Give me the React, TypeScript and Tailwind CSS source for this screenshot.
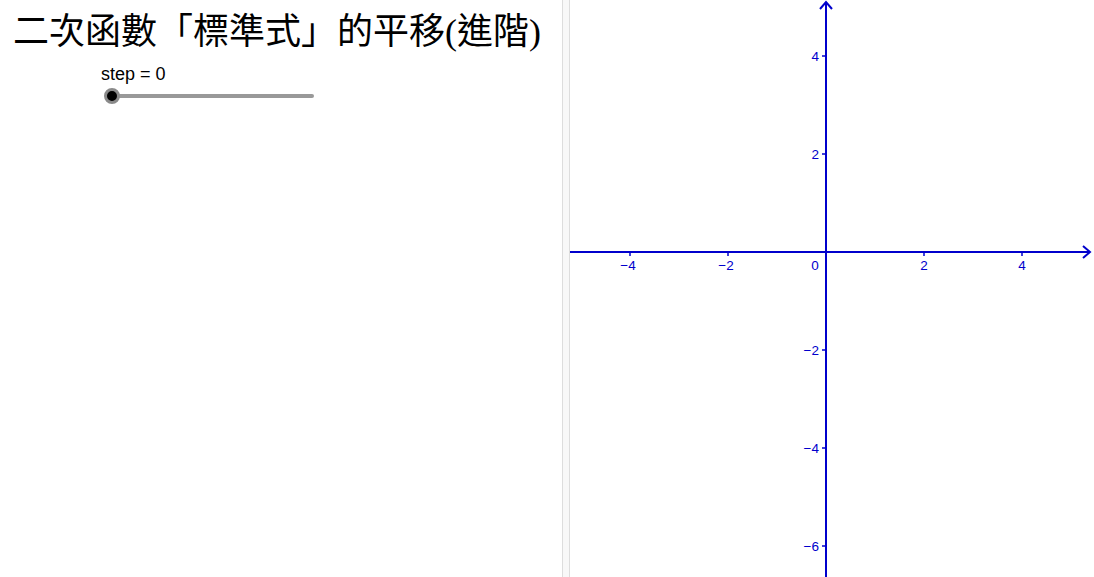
import React from 'react';

const AXIS = '#0000cc';
const UNIT = 49;
const OX = 256;
const OY = 252;

const xTicks = [-4, -2, 2, 4];
const yTicks = [4, 2, -2, -4, -6];

const fmt = (n: number) => (n < 0 ? `\u2212${-n}` : `${n}`);
const LABEL_FONT = "'Liberation Sans', Arial, sans-serif";

const Graph: React.FC = () => (
  <svg width="524" height="577" viewBox="0 0 524 577" className="block">
    {/* x axis */}
    <line x1="0" y1={OY} x2="520" y2={OY} stroke={AXIS} strokeWidth="2" />
    <polyline points={`513,${OY - 6} 520,${OY} 513,${OY + 6}`} fill="none" stroke={AXIS} strokeWidth="2" />
    {/* y axis */}
    <line x1={OX} y1="2" x2={OX} y2="577" stroke={AXIS} strokeWidth="2" />
    <polyline points={`${OX - 6},9 ${OX},2 ${OX + 6},9`} fill="none" stroke={AXIS} strokeWidth="2" />

    {xTicks.map((t) => (
      <g key={`x${t}`}>
        <line x1={OX + t * UNIT} y1={OY} x2={OX + t * UNIT} y2={OY + 4} stroke={AXIS} strokeWidth="1.5" />
        <text
          x={OX + t * UNIT + (t < 0 ? -2 : 0)}
          y={OY + 18}
          fill={AXIS}
          fontSize="13.5"
          fontFamily={LABEL_FONT}
          textAnchor="middle"
        >
          {fmt(t)}
        </text>
      </g>
    ))}
    <text x={OX - 11} y={OY + 18} fill={AXIS} fontSize="13.5" fontFamily={LABEL_FONT} textAnchor="middle">
      0
    </text>

    {yTicks.map((t) => (
      <g key={`y${t}`}>
        <line x1={OX - 4} y1={OY - t * UNIT} x2={OX} y2={OY - t * UNIT} stroke={AXIS} strokeWidth="1.5" />
        <text
          x={OX - 7}
          y={OY - t * UNIT + 5}
          fill={AXIS}
          fontSize="13.5"
          fontFamily={LABEL_FONT}
          textAnchor="end"
        >
          {fmt(t)}
        </text>
      </g>
    ))}
  </svg>
);

export default function App() {
  return (
    <div className="flex h-[577px] w-[1094px] overflow-hidden bg-white">
      {/* left panel */}
      <div className="relative w-[562px] shrink-0">
        <h1
          className="absolute left-[13px] top-[9px] whitespace-nowrap text-[36px] leading-[46px] text-black"
          style={{ fontFamily: "'Liberation Serif', 'Noto Sans CJK TC', serif" }}
        >
          二次函數「標準式」的平移(進階)
        </h1>
        <div
          className="absolute left-[101px] top-[63px] text-[18px] leading-[22px] text-black"
          style={{ fontFamily: LABEL_FONT }}
        >
          step = 0
        </div>
        {/* slider */}
        <div className="absolute left-[104px] top-[88px] flex h-[16px] w-[212px] items-center">
          <div className="ml-[8px] h-[4px] w-[202px] rounded-full bg-[#999999]" />
          <div className="absolute left-0 top-0 h-[16px] w-[16px] rounded-full border-[3px] border-[#8a8a8a] bg-black" />
        </div>
      </div>

      {/* divider */}
      <div className="h-full w-[8px] shrink-0 border-x border-[#dddddd] bg-[#f8f8f8]" />

      {/* graphics */}
      <div className="flex-1">
        <Graph />
      </div>
    </div>
  );
}
